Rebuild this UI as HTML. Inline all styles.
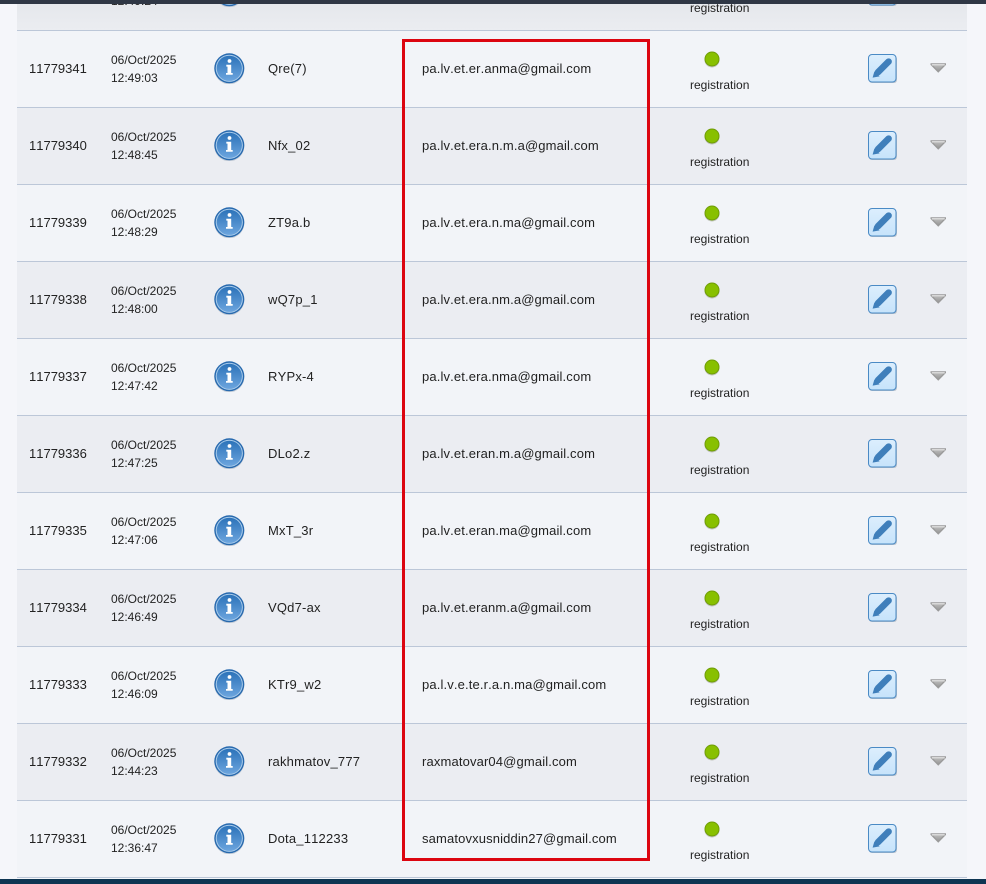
<!DOCTYPE html>
<html><head><meta charset="utf-8"><style>
html,body{margin:0;padding:0}
body{width:986px;height:884px;overflow:hidden;position:relative;background:#f5f6fa;font-family:"Liberation Sans",Arial,sans-serif;color:#222;font-kerning:none}
.r{position:absolute;left:17px;width:950px;height:76px;border-bottom:1px solid #bcc7d8;background:#f2f4f8}
.r.e{background:#ebedf2}
.r>*{position:absolute}
.id{left:12px;top:30px;font-size:13px;line-height:16px;white-space:nowrap}
.d{left:94px;top:20px;font-size:12px;line-height:18px;white-space:nowrap}
.n{left:251px;top:30px;font-size:13px;line-height:16px;white-space:nowrap;letter-spacing:.2px}
.m{left:405px;top:30px;font-size:13px;line-height:16px;white-space:nowrap;letter-spacing:.14px}
.s{left:673px;top:46px;font-size:12px;line-height:16px;white-space:nowrap}
.i{left:196px;top:21px;width:32px;height:32px}
.g{left:687px;top:20px;width:16px;height:17px}
.b{left:851px;top:23px;width:29px;height:29px}
.t{left:913px;top:32px;width:17px;height:10px}
#top{position:absolute;left:0;top:0;width:986px;height:4px;background:#2f3745;z-index:3}
#bot{position:absolute;left:0;top:879px;width:986px;height:5px;background:#0e3552;z-index:3}
#red{position:absolute;left:402px;top:39px;width:242px;height:816px;border:3px solid #dc0510;z-index:2}
</style></head><body>
<svg width="0" height="0" style="position:absolute"><defs>
<linearGradient id="ig" x1="0" y1="0" x2="0" y2="1"><stop offset="0" stop-color="#2c73b9"/><stop offset="1" stop-color="#6ca5de"/></linearGradient>
<linearGradient id="bg" x1="0" y1="0" x2="0" y2="1"><stop offset="0" stop-color="#dceefd"/><stop offset="1" stop-color="#c6e3fb"/></linearGradient>
<linearGradient id="tg" x1="0" y1="0" x2="0" y2="1"><stop offset="0" stop-color="#b8b8b8"/><stop offset="1" stop-color="#989898"/></linearGradient>
<symbol id="info" viewBox="0 0 32 32"><circle cx="16.300" cy="17.300" r="15" fill="#aab6c5" opacity=".6"/><circle cx="16.300" cy="16.300" r="15" fill="#2769ae"/><circle cx="16.300" cy="16.300" r="13.600" fill="#a9cbea"/><circle cx="16.300" cy="16.300" r="12.600" fill="url(#ig)"/><circle cx="16.500" cy="9" r="1.900" fill="#fff"/><path d="M13.300 12.800h4.900v8.200h1.500v1.800h-6.700v-1.800h1.500v-6.400h-1.200z" fill="#fff"/></symbol>
<symbol id="dot" viewBox="0 0 16 17"><circle cx="8" cy="9" r="7.500" fill="#8f9680" opacity=".5"/><circle cx="8" cy="8" r="7.500" fill="#6f9c06"/><circle cx="8" cy="8" r="6.500" fill="#88c000"/></symbol>
<symbol id="edit" viewBox="0 0 29 29"><rect x="1" y="2" width="28" height="27" rx="3" fill="#9aa5b2" opacity=".6"/><rect x=".5" y=".5" width="27.500" height="27.500" rx="3.500" fill="url(#bg)" stroke="#4a8ac5"/><path d="M20.600 7.600L10 18.200" stroke="#3f7fbb" stroke-width="6.500" stroke-linecap="round" fill="none"/><path d="M6.400 17.400l5.200 5-7 1.200z" fill="#3f7fbb"/></symbol>
<symbol id="tri" viewBox="0 0 17 10"><path d="M.5 .3h15.500v1.600l-7.750 7.800L.5 1.900z" fill="#9a9a9a"/><path d="M1.800 1.300h12.900v1.100H1.800z" fill="#f3f3f3"/><path d="M3 2.400h10.500l-5.250 5.500z" fill="url(#tg)"/></symbol>
</defs></svg>
<div id="top"></div>
<div class="r" style="top:-46px;background:linear-gradient(#dadde2,#ebedf1)"><div class="d">06/Oct/2025<br>12:49:24</div><svg class="i"><use href="#info"/></svg><div class="s">registration</div><svg class="b"><use href="#edit"/></svg></div>

<div class="r" style="top:31px"><div class="id">11779341</div><div class="d">06/Oct/2025<br>12:49:03</div><svg class="i"><use href="#info"/></svg><div class="n">Qre(7)</div><div class="m">pa.lv.et.er.anma@gmail.com</div><svg class="g"><use href="#dot"/></svg><div class="s">registration</div><svg class="b"><use href="#edit"/></svg><svg class="t"><use href="#tri"/></svg></div>

<div class="r e" style="top:108px"><div class="id">11779340</div><div class="d">06/Oct/2025<br>12:48:45</div><svg class="i"><use href="#info"/></svg><div class="n">Nfx_02</div><div class="m">pa.lv.et.era.n.m.a@gmail.com</div><svg class="g"><use href="#dot"/></svg><div class="s">registration</div><svg class="b"><use href="#edit"/></svg><svg class="t"><use href="#tri"/></svg></div>

<div class="r" style="top:185px"><div class="id">11779339</div><div class="d">06/Oct/2025<br>12:48:29</div><svg class="i"><use href="#info"/></svg><div class="n">ZT9a.b</div><div class="m">pa.lv.et.era.n.ma@gmail.com</div><svg class="g"><use href="#dot"/></svg><div class="s">registration</div><svg class="b"><use href="#edit"/></svg><svg class="t"><use href="#tri"/></svg></div>

<div class="r e" style="top:262px"><div class="id">11779338</div><div class="d">06/Oct/2025<br>12:48:00</div><svg class="i"><use href="#info"/></svg><div class="n">wQ7p_1</div><div class="m">pa.lv.et.era.nm.a@gmail.com</div><svg class="g"><use href="#dot"/></svg><div class="s">registration</div><svg class="b"><use href="#edit"/></svg><svg class="t"><use href="#tri"/></svg></div>

<div class="r" style="top:339px"><div class="id">11779337</div><div class="d">06/Oct/2025<br>12:47:42</div><svg class="i"><use href="#info"/></svg><div class="n">RYPx-4</div><div class="m">pa.lv.et.era.nma@gmail.com</div><svg class="g"><use href="#dot"/></svg><div class="s">registration</div><svg class="b"><use href="#edit"/></svg><svg class="t"><use href="#tri"/></svg></div>

<div class="r e" style="top:416px"><div class="id">11779336</div><div class="d">06/Oct/2025<br>12:47:25</div><svg class="i"><use href="#info"/></svg><div class="n">DLo2.z</div><div class="m">pa.lv.et.eran.m.a@gmail.com</div><svg class="g"><use href="#dot"/></svg><div class="s">registration</div><svg class="b"><use href="#edit"/></svg><svg class="t"><use href="#tri"/></svg></div>

<div class="r" style="top:493px"><div class="id">11779335</div><div class="d">06/Oct/2025<br>12:47:06</div><svg class="i"><use href="#info"/></svg><div class="n">MxT_3r</div><div class="m">pa.lv.et.eran.ma@gmail.com</div><svg class="g"><use href="#dot"/></svg><div class="s">registration</div><svg class="b"><use href="#edit"/></svg><svg class="t"><use href="#tri"/></svg></div>

<div class="r e" style="top:570px"><div class="id">11779334</div><div class="d">06/Oct/2025<br>12:46:49</div><svg class="i"><use href="#info"/></svg><div class="n">VQd7-ax</div><div class="m">pa.lv.et.eranm.a@gmail.com</div><svg class="g"><use href="#dot"/></svg><div class="s">registration</div><svg class="b"><use href="#edit"/></svg><svg class="t"><use href="#tri"/></svg></div>

<div class="r" style="top:647px"><div class="id">11779333</div><div class="d">06/Oct/2025<br>12:46:09</div><svg class="i"><use href="#info"/></svg><div class="n">KTr9_w2</div><div class="m">pa.l.v.e.te.r.a.n.ma@gmail.com</div><svg class="g"><use href="#dot"/></svg><div class="s">registration</div><svg class="b"><use href="#edit"/></svg><svg class="t"><use href="#tri"/></svg></div>

<div class="r e" style="top:724px"><div class="id">11779332</div><div class="d">06/Oct/2025<br>12:44:23</div><svg class="i"><use href="#info"/></svg><div class="n">rakhmatov_777</div><div class="m">raxmatovar04@gmail.com</div><svg class="g"><use href="#dot"/></svg><div class="s">registration</div><svg class="b"><use href="#edit"/></svg><svg class="t"><use href="#tri"/></svg></div>

<div class="r" style="top:801px"><div class="id">11779331</div><div class="d">06/Oct/2025<br>12:36:47</div><svg class="i"><use href="#info"/></svg><div class="n">Dota_112233</div><div class="m">samatovxusniddin27@gmail.com</div><svg class="g"><use href="#dot"/></svg><div class="s">registration</div><svg class="b"><use href="#edit"/></svg><svg class="t"><use href="#tri"/></svg></div>

<div id="red"></div>
<div id="bot"></div>
</body></html>
